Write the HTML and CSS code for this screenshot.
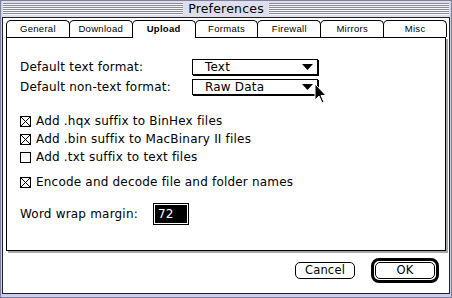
FILE: index.html
```html
<!DOCTYPE html>
<html lang="en">
<head>
    <meta charset="UTF-8">
    <title>Preferences</title>
    <link rel="stylesheet" href="styles.css">
</head>
<body>
<div class="window">
    <div class="titlebar">
        <span class="stripes"></span>
        <span class="title">Preferences</span>
        <span class="stripes"></span>
    </div>
    <div class="content">
        <div class="tabs">
            <div class="tab">General</div>
            <div class="tab">Download</div>
            <div class="tab active">Upload</div>
            <div class="tab">Formats</div>
            <div class="tab">Firewall</div>
            <div class="tab">Mirrors</div>
            <div class="tab">Misc</div>
        </div>
        <div class="panel">
            <div class="field-row">
                <span class="label">Default text format:</span>
                <div class="popup">
                    <span>Text</span>
                    <svg width="11" height="6" viewBox="0 0 11 6"><polygon points="0,0 11,0 5.5,6" fill="#000"/></svg>
                </div>
            </div>
            <div class="field-row">
                <span class="label">Default non-text format:</span>
                <div class="popup">
                    <span>Raw Data</span>
                    <svg width="11" height="6" viewBox="0 0 11 6"><polygon points="0,0 11,0 5.5,6" fill="#000"/></svg>
                </div>
            </div>

            <div class="checks">
                <div class="check">
                    <svg class="box" width="11" height="11" viewBox="0 0 11 11" shape-rendering="crispEdges"><rect x="0.5" y="0.5" width="10" height="10" fill="#fff" stroke="#000"/><path d="M1 1L10 10M10 1L1 10" stroke="#000"/></svg>
                    <span>Add .hqx suffix to BinHex files</span>
                </div>
                <div class="check">
                    <svg class="box" width="11" height="11" viewBox="0 0 11 11" shape-rendering="crispEdges"><rect x="0.5" y="0.5" width="10" height="10" fill="#fff" stroke="#000"/><path d="M1 1L10 10M10 1L1 10" stroke="#000"/></svg>
                    <span>Add .bin suffix to MacBinary II files</span>
                </div>
                <div class="check">
                    <svg class="box" width="11" height="11" viewBox="0 0 11 11" shape-rendering="crispEdges"><rect x="0.5" y="0.5" width="10" height="10" fill="#fff" stroke="#000"/></svg>
                    <span>Add .txt suffix to text files</span>
                </div>
            </div>

            <div class="check encode">
                <svg class="box" width="11" height="11" viewBox="0 0 11 11" shape-rendering="crispEdges"><rect x="0.5" y="0.5" width="10" height="10" fill="#fff" stroke="#000"/><path d="M1 1L10 10M10 1L1 10" stroke="#000"/></svg>
                <span>Encode and decode file and folder names</span>
            </div>

            <div class="wrap-row">
                <span class="wrap-label">Word wrap margin:</span>
                <div class="numfield"><span>72</span></div>
            </div>
        </div>
        <div class="buttons">
            <button class="btn">Cancel</button>
            <div class="default-ring"><button class="btn">OK</button></div>
        </div>
    </div>
    <svg class="cursor" width="13" height="21" viewBox="0 0 13 21"><path d="M1 1L1 17L5 13L8 20L10 19L7 12.5L12 12.5Z" fill="#000" stroke="#fff" stroke-width="1"/></svg>
</div>
</body>
</html>
```

FILE: styles.css
```css
body {
    margin: 0;
    font-family: "DejaVu Sans", sans-serif;
    font-size: 12px;
    letter-spacing: 0.2px;
    color: #000;
    background: #fff;
}
.window {
    position: relative;
    width: 452px;
    height: 298px;
    box-sizing: border-box;
    border: 1px solid #80809a;
    background: #ccccf0;
    padding: 0 1px 3px;
    display: flex;
    flex-direction: column;
}
.titlebar {
    height: 16px;
    display: flex;
    align-items: center;
    padding: 0 1px;
    background: #dedeee;
}
.stripes {
    flex: 1;
    height: 12px;
    background: repeating-linear-gradient(#8a8a94 0 1px, #f6f6ff 1px 2px);
}
.title {
    padding: 0 5px;
    font-size: 12.5px;
    line-height: 16px;
}
.content {
    flex: 1;
    background: #fff;
    border: 1px solid #222;
    padding: 2px 0 0 3px;
    display: flex;
    flex-direction: column;
}
.tabs {
    display: flex;
    width: 440px;
    height: 17px;
}
.tab {
    flex: 1;
    border: 1px solid #000;
    border-bottom: none;
    border-radius: 5px 5px 0 0;
    margin-right: -1px;
    background: #fff;
    text-align: center;
    font-family: "Liberation Sans", sans-serif;
    font-size: 9.5px;
    letter-spacing: 0.3px;
    line-height: 15px;
}
.tab.active {
    position: relative;
    z-index: 1;
    height: 17px;
    font-weight: bold;
}
.panel {
    width: 440px;
    height: 214px;
    box-sizing: border-box;
    border: 1px solid #000;
    box-shadow: 2px 2px 0 #a6a6a6;
    padding: 21px 0 0 13px;
}
.field-row {
    display: flex;
    align-items: center;
    height: 16px;
    margin-bottom: 4px;
}
.label {
    width: 172px;
}
.popup {
    width: 126px;
    height: 16px;
    box-sizing: border-box;
    border: 1px solid #000;
    box-shadow: 1px 1px 0 #000;
    display: flex;
    align-items: center;
    justify-content: space-between;
    padding: 0 4px 0 12px;
}
.checks {
    margin-top: 17px;
}
.check {
    display: flex;
    align-items: center;
    gap: 5px;
    height: 18px;
}
.box {
    flex: none;
}
.encode {
    margin-top: 7px;
}
.wrap-row {
    display: flex;
    align-items: center;
    margin-top: 12px;
    height: 22px;
}
.wrap-label {
    width: 133px;
}
.numfield {
    width: 36px;
    height: 22px;
    box-sizing: border-box;
    border: 1px solid #000;
    padding: 1px;
}
.numfield span {
    display: block;
    height: 100%;
    background: #000;
    color: #fff;
    padding-left: 3px;
    line-height: 18px;
}
.buttons {
    display: flex;
    justify-content: flex-end;
    align-items: center;
    gap: 16px;
    margin-top: 7px;
    padding-right: 10px;
    height: 25px;
}
.btn {
    width: 60px;
    height: 17px;
    padding: 0;
    border: 1px solid #000;
    border-radius: 5px;
    background: #fff;
    color: #000;
    font-family: "DejaVu Sans", sans-serif;
    font-size: 11.5px;
    letter-spacing: 0.2px;
    line-height: 15px;
}
.default-ring {
    display: flex;
    border: 3px solid #000;
    border-radius: 8px;
    padding: 1px;
}
.cursor {
    position: absolute;
    left: 313px;
    top: 82px;
}
```
